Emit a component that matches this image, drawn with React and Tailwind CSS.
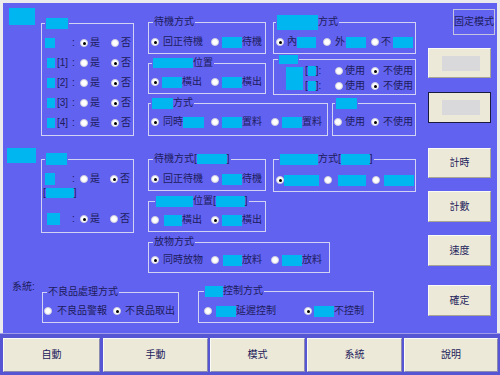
import React from "react";

// cyan masking block used all over the form
const Cy = ({ c = "" }) => <span className={`block shrink-0 bg-[#00b6f0] ${c}`} />;

function Radio({ on, className = "" }) {
  return (
    <span
      className={`w-[8px] h-[8px] rounded-full bg-white border border-[#cfcfe2] flex items-center justify-center shrink-0 ${className}`}
    >
      {on && <span className="w-[3px] h-[3px] rounded-full bg-black" />}
    </span>
  );
}

function Group({ legend, lg = "ml-[4px]", className = "", children }) {
  return (
    <fieldset className={`border border-[#d2d2f4] shrink-0 ${className}`}>
      <legend className={`${lg} px-[1px] flex items-center h-[12px] leading-[12px] whitespace-nowrap`}>
        {legend}
      </legend>
      {children}
    </fieldset>
  );
}

function YN({ head, yes, gap = "ml-[11px]", className = "" }) {
  return (
    <div className={`flex items-center h-[12px] ${className}`}>
      <div className="w-[27px] flex items-center shrink-0">{head}</div>
      <span className="w-[8px]">:</span>
      <Radio on={yes} />
      <span className="ml-[2px]">是</span>
      <Radio on={!yes} className={gap} />
      <span className="ml-[2px]">否</span>
    </div>
  );
}

function WaitRow() {
  return (
    <div className="flex items-center h-[12px] pl-[2px]">
      <Radio on />
      <span className="ml-[4px] w-[40px]">回正待機</span>
      <Radio className="ml-[8px]" />
      <Cy c="ml-[3px] w-[20px] h-[11px]" />
      <span>待機</span>
    </div>
  );
}

function Btn({ dark, className = "", children }) {
  return (
    <div
      className={`ml-[8px] w-[63px] shrink-0 bg-[#ece9d8] flex items-center justify-center border ${
        dark
          ? "border-[#1a1a40]"
          : "border-t-[#fbfbf6] border-l-[#fbfbf6] border-r-[#a9a593] border-b-[#a9a593]"
      } ${className}`}
    >
      {children}
    </div>
  );
}

function Tab({ className = "", children }) {
  return (
    <div
      className={`h-[34px] shrink-0 bg-[#ece9d8] border border-t-[#fbfbf6] border-l-[#fbfbf6] border-r-[#8c8ab0] border-b-[#8c8ab0] flex items-center justify-center ${className}`}
    >
      {children}
    </div>
  );
}

export default function App() {
  return (
    <div className="w-[500px] h-[375px] bg-[#ebebee] flex flex-col overflow-hidden font-['Liberation_Sans','Noto_Sans_CJK_TC',sans-serif] text-[10px] leading-[12px] text-[#1c1c5c]">
      <div className="mt-[3px] ml-[3px] w-[494px] h-[330px] shrink-0 bg-[#6262f0] flex">
        <div className="w-[417px] flex flex-col">
          {/* section 1 */}
          <div className="h-[134px] shrink-0 flex items-start">
            <div className="w-[38px] shrink-0">
              <Cy c="ml-[6px] mt-[5px] w-[26px] h-[17px]" />
            </div>
            <Group legend={<Cy c="w-[22px] h-[11px]" />} lg="ml-[3px]" className="mt-[14px] w-[93px] h-[119px]">
              <div className="pt-[8px] pl-[3px] flex flex-col gap-[8px]">
                <YN yes head={<Cy c="w-[10px] h-[10px]" />} />
                <YN head={<><Cy c="ml-[2px] w-[8px] h-[10px]" /><span className="ml-[2px]">[1]</span></>} />
                <YN head={<><Cy c="ml-[2px] w-[8px] h-[10px]" /><span className="ml-[2px]">[2]</span></>} />
                <YN head={<><Cy c="ml-[2px] w-[8px] h-[10px]" /><span className="ml-[2px]">[3]</span></>} />
                <YN head={<><Cy c="ml-[2px] w-[8px] h-[10px]" /><span className="ml-[2px]">[4]</span></>} />
              </div>
            </Group>
            <div className="ml-[14px] mt-[13px] w-[268px] flex flex-col">
              <div className="flex items-start">
                <Group legend="待機方式" className="w-[118px] h-[38px]">
                  <div className="pt-[8px]">
                    <WaitRow />
                  </div>
                </Group>
                <Group
                  legend={<><Cy c="w-[41px] h-[15px]" /><span>方式</span></>}
                  lg="ml-[2px]"
                  className="ml-[7px] w-[143px] h-[38px]"
                >
                  <div className="pt-[8px] pl-[2px] flex items-center h-[20px]">
                    <Radio on />
                    <span className="ml-[3px]">內</span>
                    <Cy c="w-[19px] h-[11px]" />
                    <Radio className="ml-[7px]" />
                    <span className="ml-[4px]">外</span>
                    <Cy c="ml-[1px] w-[20px] h-[11px]" />
                    <Radio className="ml-[5px]" />
                    <span className="ml-[2px]">不</span>
                    <Cy c="ml-[2px] w-[20px] h-[11px]" />
                  </div>
                </Group>
              </div>
              <div className="flex items-start">
                <Group
                  legend={<><Cy c="w-[40px] h-[10px]" /><span>位置</span></>}
                  lg="ml-[3px]"
                  className="mt-[3px] w-[118px] h-[37px]"
                >
                  <div className="pt-[7px] pl-[2px] flex items-center h-[19px]">
                    <Radio on />
                    <Cy c="ml-[3px] w-[20px] h-[11px]" />
                    <span>橫出</span>
                    <Radio className="ml-[9px]" />
                    <Cy c="ml-[3px] w-[20px] h-[11px]" />
                    <span>橫出</span>
                  </div>
                </Group>
                <Group legend={<Cy c="w-[19px] h-[9px]" />} lg="ml-[4px]" className="ml-[7px] mt-[-1px] w-[143px] h-[42px]">
                  <div className="pl-[12px] flex items-start">
                    <Cy c="mt-[2px] w-[17px] h-[23px]" />
                    <div className="flex flex-col gap-[3px]">
                      {[false, false].map((_, i) => (
                        <div key={i} className="flex items-center h-[12px]">
                          <div className="w-[32px] flex items-center shrink-0 pl-[2px]">
                            <span>[</span>
                            <Cy c="w-[8px] h-[10px]" />
                            <span>]:</span>
                          </div>
                          <Radio />
                          <span className="ml-[2px]">使用</span>
                          <Radio on className="ml-[6px]" />
                          <span className="ml-[4px]">不使用</span>
                        </div>
                      ))}
                    </div>
                  </div>
                </Group>
              </div>
              <div className="mt-[2px] flex items-start">
                <Group
                  legend={<><Cy c="w-[21px] h-[11px]" /><span>方式</span></>}
                  lg="ml-[2px]"
                  className="w-[180px] h-[39px]"
                >
                  <div className="pt-[7px] pl-[2px] flex items-center h-[19px]">
                    <Radio on />
                    <span className="ml-[4px]">同時</span>
                    <Cy c="w-[21px] h-[11px]" />
                    <Radio className="ml-[7px]" />
                    <Cy c="ml-[3px] w-[20px] h-[11px]" />
                    <span>置料</span>
                    <Radio className="ml-[9px]" />
                    <Cy c="ml-[3px] w-[20px] h-[11px]" />
                    <span>置料</span>
                  </div>
                </Group>
                <Group legend={<Cy c="w-[21px] h-[11px]" />} lg="ml-[2px]" className="ml-[4px] w-[84px] h-[39px]">
                  <div className="pt-[7px] pl-[1px] flex items-center h-[19px]">
                    <Radio />
                    <span className="ml-[3px]">使用</span>
                    <Radio on className="ml-[6px]" />
                    <span className="ml-[4px]">不使用</span>
                  </div>
                </Group>
              </div>
            </div>
          </div>

          {/* section 2 */}
          <div className="h-[138px] shrink-0 flex items-start">
            <div className="w-[38px] shrink-0">
              <Cy c="ml-[4px] mt-[11px] w-[29px] h-[15px]" />
            </div>
            <Group legend={<Cy c="w-[21px] h-[12px]" />} lg="ml-[3px]" className="mt-[16px] w-[93px] h-[80px]">
              <div className="pt-[8px] pl-[1px] flex flex-col">
                <YN className="ml-[2px]" gap="ml-[10px]" head={<Cy c="w-[10px] h-[12px]" />} />
                <div className="mt-[2px] flex items-center h-[12px]">
                  <span>[</span>
                  <Cy c="w-[28px] h-[10px]" />
                  <span>]</span>
                </div>
                <YN className="ml-[2px] mt-[14px]" yes gap="ml-[10px]" head={<Cy c="ml-[2px] w-[13px] h-[12px]" />} />
              </div>
            </Group>
            <div className="ml-[14px] mt-[16px] w-[268px] flex flex-col">
              <div className="flex items-start">
                <Group
                  legend={<><span>待機方式[</span><Cy c="w-[30px] h-[10px]" /><span>]</span></>}
                  className="w-[118px] h-[38px]"
                >
                  <div className="pt-[8px]">
                    <WaitRow />
                  </div>
                </Group>
                <Group
                  legend={<><Cy c="w-[38px] h-[11px]" /><span>方式[</span><Cy c="w-[29px] h-[11px]" /><span>]</span></>}
                  lg="ml-[5px]"
                  className="ml-[7px] w-[143px] h-[39px]"
                >
                  <div className="pt-[9px] pl-[2px] flex items-center h-[21px]">
                    <Radio on />
                    <Cy c="w-[35px] h-[11px]" />
                    <Radio className="ml-[5px]" />
                    <Cy c="ml-[6px] w-[28px] h-[11px]" />
                    <Radio className="ml-[6px]" />
                    <Cy c="ml-[4px] w-[30px] h-[11px]" />
                  </div>
                </Group>
              </div>
              <Group
                legend={<><Cy c="w-[37px] h-[11px]" /><span>位置[</span><Cy c="w-[29px] h-[11px]" /><span>]</span></>}
                lg="ml-[6px]"
                className="mt-[3px] w-[118px] h-[37px]"
              >
                <div className="pt-[7px] pl-[2px] flex items-center h-[19px]">
                  <Radio />
                  <Cy c="ml-[5px] w-[18px] h-[11px]" />
                  <span>橫出</span>
                  <Radio on className="ml-[9px]" />
                  <Cy c="ml-[3px] w-[20px] h-[11px]" />
                  <span>橫出</span>
                </div>
              </Group>
              <Group legend="放物方式" className="mt-[4px] w-[182px] h-[37px]">
                <div className="pt-[6px] pl-[2px] flex items-center h-[18px]">
                  <Radio on />
                  <span className="ml-[4px] w-[40px]">同時放物</span>
                  <Radio className="ml-[8px]" />
                  <Cy c="ml-[4px] w-[19px] h-[11px]" />
                  <span>放料</span>
                  <Radio className="ml-[9px]" />
                  <Cy c="ml-[3px] w-[20px] h-[11px]" />
                  <span>放料</span>
                </div>
              </Group>
            </div>
          </div>

          {/* section 3 */}
          <div className="flex-1 flex items-start">
            <div className="w-[39px] shrink-0 pl-[9px] pt-[6px] whitespace-nowrap">系統:</div>
            <Group legend="不良品處理方式" className="mt-[11px] w-[137px] h-[37px]">
              <div className="pt-[7px] pl-[1px] flex items-center h-[19px]">
                <Radio />
                <span className="ml-[5px] w-[50px]">不良品警報</span>
                <Radio on className="ml-[6px]" />
                <span className="ml-[4px]">不良品取出</span>
              </div>
            </Group>
            <Group
              legend={<><Cy c="w-[18px] h-[11px]" /><span>控制方式</span></>}
              lg="ml-[5px]"
              className="ml-[19px] mt-[10px] w-[176px] h-[38px]"
            >
              <div className="pt-[8px] pl-[5px] flex items-center h-[20px]">
                <Radio />
                <Cy c="ml-[4px] w-[20px] h-[11px]" />
                <span className="w-[40px]">延遲控制</span>
                <Radio on className="ml-[28px]" />
                <Cy c="ml-[2px] w-[20px] h-[11px]" />
                <span>不控制</span>
              </div>
            </Group>
          </div>
        </div>

        {/* right buttons */}
        <div className="flex-1 flex flex-col">
          <div className="ml-[33px] mt-[6px] w-[42px] h-[26px] border border-[#c4c4e0] flex items-center justify-center whitespace-nowrap">
            固定模式
          </div>
          <Btn className="mt-[13px] h-[30px]">
            <div className="ml-[2px] w-[38px] h-[15px] bg-[#d9d9dc]" />
          </Btn>
          <Btn dark className="mt-[14px] h-[31px]">
            <div className="ml-[2px] w-[38px] h-[15px] bg-[#d9d9dc]" />
          </Btn>
          <Btn className="mt-[25px] h-[30px]">計時</Btn>
          <Btn className="mt-[13px] h-[31px]">計數</Btn>
          <Btn className="mt-[13px] h-[31px]">速度</Btn>
          <Btn className="mt-[19px] h-[31px]">確定</Btn>
        </div>
      </div>

      {/* bottom tabs */}
      <div className="flex-1 bg-[#5656d4] border-t border-[#9c9ce8] pt-[4px] pl-[3px] flex items-start">
        <Tab className="w-[97px]">自動</Tab>
        <Tab className="ml-[3px] w-[105px]">手動</Tab>
        <Tab className="ml-[2px] w-[95px]">模式</Tab>
        <Tab className="ml-[2px] w-[95px]">系統</Tab>
        <Tab className="ml-[2px] w-[94px]">說明</Tab>
      </div>
    </div>
  );
}
